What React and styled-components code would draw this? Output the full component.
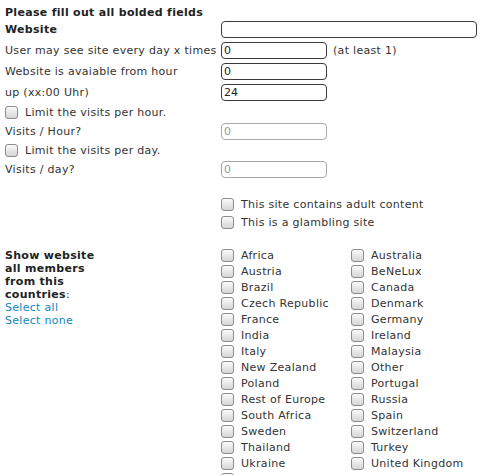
import React from 'react'
import styled, { createGlobalStyle } from 'styled-components'

const Global = createGlobalStyle`
  body {
    margin: 0;
    background: #fff;
    font-family: "DejaVu Sans", Verdana, sans-serif;
    font-size: 11px;
    letter-spacing: 0.3px;
    color: #333;
  }
`;

const Page = styled.div`
  padding: 3px 5px 0 5px;
  width: 482px;
  box-sizing: border-box;
  height: 475px;
  overflow: hidden;
`;

const Title = styled.div`
  height: 16px;
  line-height: 19px;
  font-weight: bold;
  color: #222;
`;

const Row = styled.div`
  display: flex;
  align-items: center;
  height: ${p => p.$h || 19}px;
`;

const Label = styled.div`
  width: 216px;
  flex-shrink: 0;
  font-weight: ${p => (p.$bold ? 'bold' : 'normal')};
  color: ${p => (p.$bold ? '#222' : '#333')};
  white-space: nowrap;
`;

const Input = styled.input`
  box-sizing: border-box;
  width: ${p => p.$w || 106}px;
  height: 17px;
  margin: 0;
  padding: 0 2px;
  font-family: "DejaVu Sans", Verdana, sans-serif;
  font-size: 11px;
  color: #222;
  background: #fff;
  border: 1px solid #3a3a3a;
  border-radius: 4px;
  outline: none;
  caret-color: #000;
  &:disabled {
    border-color: #a8a8a8;
    color: #999;
    background: #fff;
  }
`;

const Hint = styled.span`
  margin-left: 6px;
`;

const Box = styled.span`
  display: inline-block;
  width: 13px;
  height: 13px;
  box-sizing: border-box;
  border: 1px solid #8c8c8c;
  border-radius: 3px;
  background: linear-gradient(to bottom, #fbfbfb 0%, #e4e4e4 60%, #d6d6d6 100%);
  flex-shrink: 0;
  margin-right: ${p => p.$gap || 7}px;
`;

const Check = styled.label`
  display: flex;
  align-items: center;
  white-space: nowrap;
`;

const Options = styled.div`
  margin-top: 16px;
  padding-left: 216px;
`;

const Countries = styled.div`
  display: flex;
  margin-top: 16px;
`;

const Side = styled.div`
  width: 216px;
  flex-shrink: 0;
  line-height: 13px;
  padding-top: 2px;
`;

const SideTitle = styled.div`
  width: 100px;
  font-weight: bold;
  color: #222;
`;

const Colon = styled.span`
  font-weight: normal;
`;

const Link = styled.a`
  display: block;
  color: #1188bb;
  text-decoration: none;
`;

const Grid = styled.div`
  display: grid;
  grid-template-columns: 130px auto;
  grid-auto-rows: 16px;
`;

const countries = [
  'Africa', 'Australia', 'Austria', 'BeNeLux', 'Brazil', 'Canada',
  'Czech Republic', 'Denmark', 'France', 'Germany', 'India', 'Ireland',
  'Italy', 'Malaysia', 'New Zealand', 'Other', 'Poland', 'Portugal',
  'Rest of Europe', 'Russia', 'South Africa', 'Spain', 'Sweden',
  'Switzerland', 'Thailand', 'Turkey', 'Ukraine', 'United Kingdom', 'USA'
];

function App() {
  return (
    <Page>
      <Global />
      <Title>Please fill out all bolded fields</Title>
      <Row $h={21}>
        <Label $bold>Website</Label>
        <Input $w={256} autoFocus defaultValue="" />
      </Row>
      <Row $h={21}>
        <Label>User may see site every day x times</Label>
        <Input defaultValue="0" />
        <Hint>(at least 1)</Hint>
      </Row>
      <Row $h={21}>
        <Label>Website is avaiable from hour</Label>
        <Input defaultValue="0" />
      </Row>
      <Row $h={21}>
        <Label>up (xx:00 Uhr)</Label>
        <Input defaultValue="24" />
      </Row>
      <Row>
        <Check><Box />Limit the visits per hour.</Check>
      </Row>
      <Row>
        <Label>Visits / Hour?</Label>
        <Input disabled defaultValue="0" />
      </Row>
      <Row>
        <Check><Box />Limit the visits per day.</Check>
      </Row>
      <Row>
        <Label>Visits / day?</Label>
        <Input disabled defaultValue="0" />
      </Row>
      <Options>
        <Row $h={18}>
          <Check><Box />This site contains adult content</Check>
        </Row>
        <Row $h={18}>
          <Check><Box />This is a glambling site</Check>
        </Row>
      </Options>
      <Countries>
        <Side>
          <SideTitle>Show website all members from this countries<Colon>:</Colon></SideTitle>
          <Link href="#">Select all</Link>
          <Link href="#">Select none</Link>
        </Side>
        <Grid>
          {countries.map(c => (
            <Check key={c}><Box $gap={7} />{c}</Check>
          ))}
        </Grid>
      </Countries>
    </Page>
  )
}

export default App
